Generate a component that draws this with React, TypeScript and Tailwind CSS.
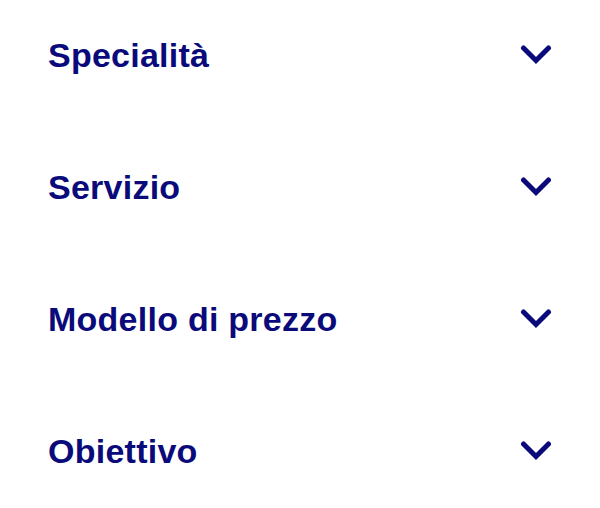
import React from "react";

const items = ["Specialità", "Servizio", "Modello di prezzo", "Obiettivo"];

function Chevron() {
  return (
    <svg width="32" height="22" viewBox="0 0 32 22" fill="none" className="shrink-0">
      <path d="M3.5 4 L16 16.5 L28.5 4" stroke="#0a0a7a" strokeWidth="5" strokeLinecap="round" strokeLinejoin="miter" />
    </svg>
  );
}

export default function App() {
  return (
    <div className="w-[600px] h-[508px] bg-white">
      <div className="flex flex-col gap-[80px] pt-[29px] pl-[48px] pr-[48px]">
        {items.map((t) => (
          <div key={t} className="flex h-[52px] items-center justify-between">
            <span
              className="text-[34px] font-bold leading-none text-[#0a0a7a] tracking-[0.25px]"
              style={{ fontFamily: "'Liberation Sans', Arial, sans-serif" }}
            >
              {t}
            </span>
            <Chevron />
          </div>
        ))}
      </div>
    </div>
  );
}
